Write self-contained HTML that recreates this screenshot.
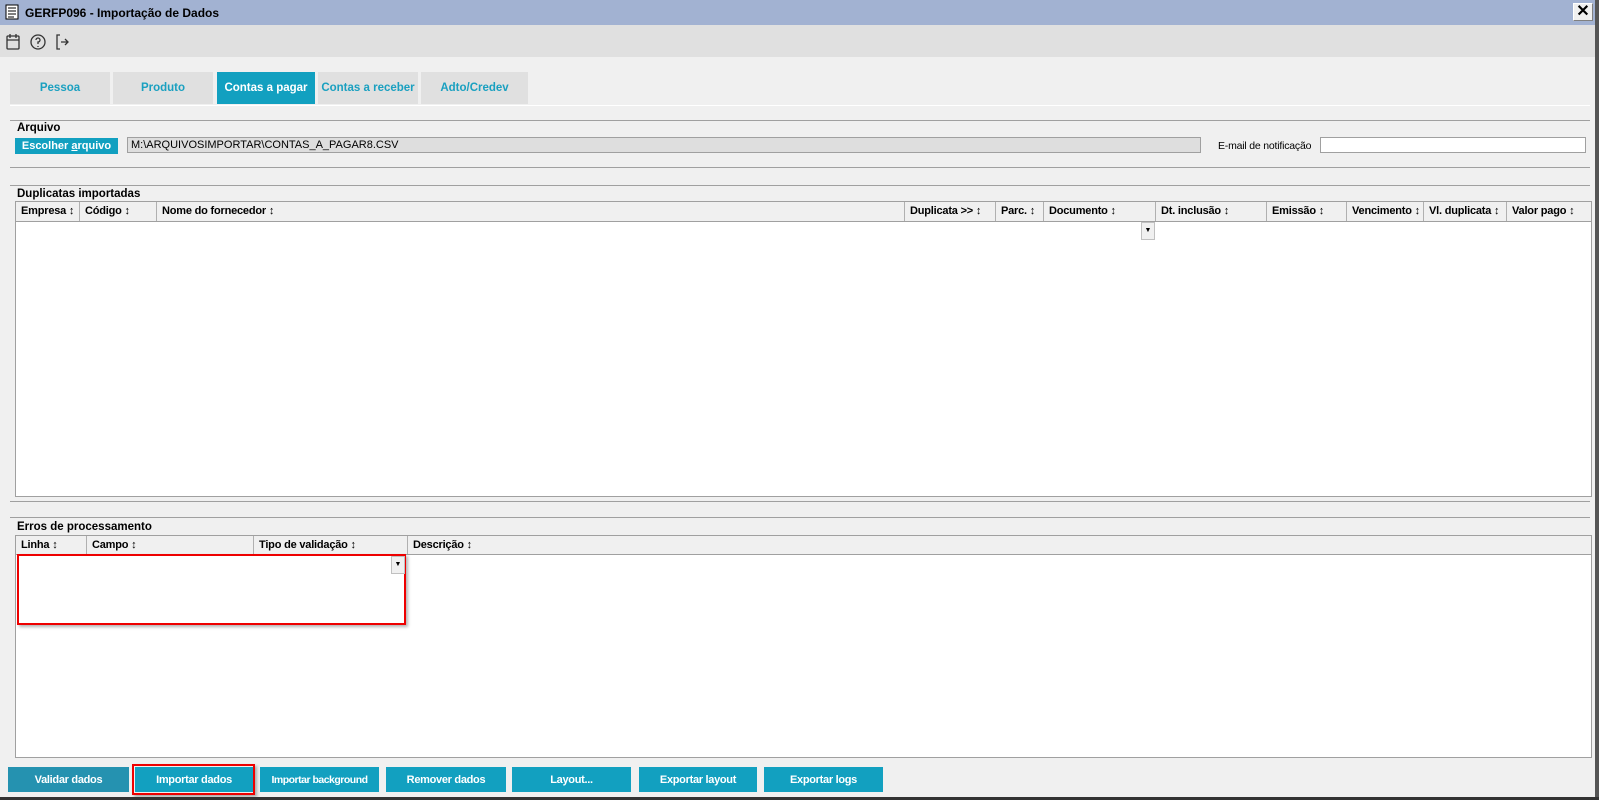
<!DOCTYPE html>
<html><head><meta charset="utf-8"><style>
*{box-sizing:border-box;margin:0;padding:0}
body{width:1599px;height:800px;background:#f0f0f0;font-family:"Liberation Sans",sans-serif;position:relative;overflow:hidden;font-size:12px;color:#000}
.a{position:absolute}
.tab{position:absolute;top:72px;height:32px;background:#e0e0e0;color:#1aa0c0;font-weight:bold;font-size:11.5px;display:flex;align-items:center;justify-content:center;white-space:nowrap}
.hl{position:absolute;height:1px;background:#a0a0a0}
.hdr{position:absolute;background:#f0f0f0;border:1px solid #a0a0a0;display:flex}
.hdr div{border-right:1px solid #b0b0b0;font-weight:bold;font-size:11px;padding-left:5px;line-height:18px;white-space:nowrap;overflow:hidden;letter-spacing:-0.2px}
.btn{position:absolute;top:767px;height:25px;background:#12a0c0;color:#fff;font-weight:bold;font-size:11px;display:flex;align-items:center;justify-content:center;white-space:nowrap;letter-spacing:-0.3px}
</style></head><body>
<div class="a" style="left:0;top:0;width:1599px;height:25px;background:#a2b2d2"></div>
<svg class="a" style="left:5px;top:4px" width="14" height="16"><rect x="1" y="1" width="12" height="14" fill="#fff" stroke="#000"/><path d="M3 4h8M3 7h8M3 10h8M3 13h6" stroke="#000"/></svg>
<div class="a" style="left:25px;top:6px;font-weight:bold;font-size:12px">GERFP096 - Importação de Dados</div>
<div class="a" style="left:1573px;top:3px;width:20px;height:18px;background:#f0f0f0;border:1px solid #fff;border-right-color:#808080;border-bottom-color:#808080;font-weight:bold;font-size:16px;text-align:center;line-height:16px">✕</div>
<div class="a" style="left:0;top:25px;width:1599px;height:32px;background:#e0e0e0"></div>
<svg class="a" style="left:5px;top:33px" width="70" height="18" fill="none" stroke="#333" stroke-width="1.3"><rect x="2" y="3" width="12" height="13" rx="1"/><path d="M2 7h12M5 1v4M11 1v4"/><circle cx="33" cy="9" r="7"/><path d="M31 7a2 2 0 1 1 2 2v2M33 13v1"/><path d="M55 2h-3v14h3M56 9h7M60 6l3 3-3 3"/></svg>
<div class="tab" style="left:10px;width:100px">Pessoa</div>
<div class="tab" style="left:113px;width:100px">Produto</div>
<div class="tab" style="left:217px;width:98px;background:#12a0c0;color:#fff">Contas a pagar</div>
<div class="tab" style="left:318px;width:100px">Contas a receber</div>
<div class="tab" style="left:421px;width:107px">Adto/Credev</div>
<div class="a" style="left:10px;top:105px;width:1580px;height:1px;background:#fff"></div>
<div class="hl" style="left:10px;top:120px;width:1580px"></div>
<div class="a" style="left:17px;top:122px;font-weight:bold;font-size:11.5px">Arquivo</div>
<div class="a" style="left:15px;top:138px;width:103px;height:16px;background:#12a0c0;color:#fff;font-weight:bold;font-size:11px;text-align:center;line-height:16px;white-space:nowrap">Escolher <u>a</u>rquivo</div>
<div class="a" style="left:127px;top:137px;width:1074px;height:16px;background:#dedede;border:1px solid #a0a0a0;font-size:11px;padding-left:3px;line-height:14px">M:\ARQUIVOSIMPORTAR\CONTAS_A_PAGAR8.CSV</div>
<div class="a" style="left:1218px;top:140px;font-size:10.5px;letter-spacing:-0.2px">E-mail de notificação</div>
<div class="a" style="left:1320px;top:137px;width:266px;height:16px;background:#fff;border:1px solid #a0a0a0"></div>
<div class="hl" style="left:10px;top:167px;width:1580px"></div>
<div class="hl" style="left:10px;top:185px;width:1580px"></div>
<div class="a" style="left:17px;top:188px;font-weight:bold;font-size:11.5px">Duplicatas importadas</div>
<div class="a" style="left:15px;top:201px;width:1577px;height:296px;background:#fff;border:1px solid #a0a0a0"></div>
<div class="hdr" style="left:15px;top:201px;width:1577px;height:21px">
<div style="width:64px">Empresa ↕</div><div style="width:77px">Código ↕</div><div style="width:748px">Nome do fornecedor ↕</div><div style="width:91px">Duplicata &gt;&gt; ↕</div><div style="width:48px">Parc. ↕</div><div style="width:112px">Documento ↕</div><div style="width:111px">Dt. inclusão ↕</div><div style="width:80px">Emissão ↕</div><div style="width:77px">Vencimento ↕</div><div style="width:83px">Vl. duplicata ↕</div><div style="width:84px;border:none">Valor pago ↕</div></div>
<div class="a" style="left:1141px;top:222px;width:14px;height:18px;background:#f0f0f0;border:1px solid #c0c0c0;font-size:7px;text-align:center;line-height:16px">▼</div>
<div class="hl" style="left:10px;top:501px;width:1580px"></div>
<div class="hl" style="left:10px;top:517px;width:1580px"></div>
<div class="a" style="left:17px;top:521px;font-weight:bold;font-size:11.5px">Erros de processamento</div>
<div class="a" style="left:15px;top:535px;width:1577px;height:223px;background:#fff;border:1px solid #a0a0a0"></div>
<div class="hdr" style="left:15px;top:535px;width:1577px;height:20px">
<div style="width:71px">Linha ↕</div><div style="width:167px">Campo ↕</div><div style="width:154px">Tipo de validação ↕</div><div style="width:300px;border:none">Descrição ↕</div></div>
<div class="a" style="left:17px;top:554px;width:389px;height:71px;border:2px solid #e00;box-shadow:2px 2px 3px rgba(0,0,0,.3)"></div>
<div class="a" style="left:391px;top:556px;width:14px;height:18px;background:#f0f0f0;border:1px solid #c0c0c0;font-size:7px;text-align:center;line-height:16px">▼</div>
<div class="btn" style="left:8px;width:121px;background:#2592b0">Validar dados</div>
<div class="a" style="left:132px;top:764px;width:123px;height:31px;border:2px solid #e00;box-shadow:2px 2px 3px rgba(0,0,0,.3)"></div>
<div class="btn" style="left:135px;width:118px">Importar dados</div>
<div class="btn" style="left:260px;width:119px;font-size:10.5px;letter-spacing:-0.5px">Importar background</div>
<div class="btn" style="left:386px;width:120px">Remover dados</div>
<div class="btn" style="left:512px;width:119px">Layout...</div>
<div class="btn" style="left:639px;width:118px">Exportar layout</div>
<div class="btn" style="left:764px;width:119px">Exportar logs</div>
<div class="a" style="left:1595px;top:0;width:4px;height:800px;background:#555"></div>
<div class="a" style="left:0;top:797px;width:1599px;height:3px;background:#333"></div>
</body></html>
